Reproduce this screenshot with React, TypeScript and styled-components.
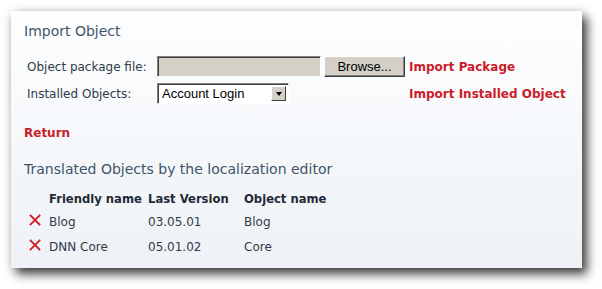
import React from 'react';
import styled, { createGlobalStyle } from 'styled-components';

const GlobalStyle = createGlobalStyle`
  html, body {
    margin: 0;
    padding: 0;
    background: #ffffff;
  }
  body {
    font-family: "DejaVu Sans", Verdana, sans-serif;
  }
`;

const Page = styled.div`
  padding: 11px 0 0 11px;
  width: 602px;
  height: 289px;
  box-sizing: border-box;
`;

const Panel = styled.div`
  width: 571px;
  height: 257px;
  box-sizing: border-box;
  padding: 12px 13px 0 13px;
  background: linear-gradient(to bottom, #fdfeff 0%, #eef2f6 100%);
  box-shadow: 5px 6px 10px rgba(0, 0, 0, 0.75), 0 0 10px rgba(0, 0, 0, 0.12);
`;

const Title = styled.div`
  font-size: 14px;
  line-height: 16px;
  color: #3f5468;
`;

const FormGrid = styled.div`
  display: grid;
  grid-template-columns: 130px 252px auto;
  grid-auto-rows: 21px;
  row-gap: 6px;
  align-items: center;
  margin: 17px 0 0 3px;
`;

const Label = styled.span`
  font-size: 12px;
  color: #2f3b48;
`;

const FileCell = styled.div`
  display: flex;
  gap: 3px;
  height: 21px;
`;

const FileInput = styled.div`
  width: 164px;
  height: 21px;
  box-sizing: border-box;
  background: #d4d0c8;
  border: 1px solid;
  border-color: #808080 #ffffff #ffffff #808080;
  box-shadow: inset 1px 1px 0 #404040;
`;

const BrowseButton = styled.button`
  width: 81px;
  height: 21px;
  padding: 0;
  font-family: "Liberation Sans", Arial, sans-serif;
  font-size: 13px;
  color: #000;
  background: #d4d0c8;
  border: 1px solid;
  border-color: #ffffff #404040 #404040 #ffffff;
  box-shadow: inset -1px -1px 0 #808080;
`;

const ActionLink = styled.a`
  font-size: 12px;
  font-weight: bold;
  color: #cc1b2b;
  text-decoration: none;
  cursor: pointer;
`;

const SelectBox = styled.div`
  position: relative;
  width: 132px;
  height: 21px;
  box-sizing: border-box;
  background: #fff;
  border: 1px solid;
  border-color: #808080 #ffffff #ffffff #808080;
  box-shadow: inset 1px 1px 0 #404040;
  font-family: "Liberation Sans", Arial, sans-serif;
  font-size: 13px;
  line-height: 19px;
  padding-left: 4px;
  color: #000;
`;

const SelectArrow = styled.span`
  position: absolute;
  top: 2px;
  right: 2px;
  width: 15px;
  height: 15px;
  box-sizing: border-box;
  background: #d4d0c8;
  border: 1px solid;
  border-color: #ffffff #404040 #404040 #ffffff;
  display: flex;
  align-items: center;
  justify-content: center;

  &::after {
    content: '';
    border-left: 3.5px solid transparent;
    border-right: 3.5px solid transparent;
    border-top: 4px solid #000;
  }
`;

const ReturnRow = styled.div`
  margin-top: 21px;
  line-height: 14px;
`;

const SubTitle = styled.div`
  margin-top: 21px;
  font-size: 14px;
  line-height: 16px;
  color: #3f5468;
`;

const ObjectsTable = styled.table`
  margin-top: 11px;
  border-collapse: collapse;
  font-size: 12px;
  color: #2f3b48;

  th {
    font-size: 11.6px;
    font-weight: bold;
    text-align: left;
    color: #1f2a36;
    height: 21px;
    padding: 0;
  }
  td {
    height: 25px;
    padding: 0;
  }
`;

const IconCell = styled.td`
  width: 25px;
  padding-left: 5px !important;
  box-sizing: border-box;
`;

const NameCell = styled.td<{ $width: number }>`
  width: ${(p) => p.$width}px;
`;

const DeleteIcon = () => (
  <svg width="12" height="12" viewBox="0 0 12 12" style={{ display: 'block', marginTop: -3 }}>
    <path d="M1.5 1.5 L10.5 10.5 M10.5 1.5 L1.5 10.5" stroke="#d11f26" strokeWidth="1.8" strokeLinecap="square" />
  </svg>
);

const rows = [
  { friendly: 'Blog', version: '03.05.01', name: 'Blog' },
  { friendly: 'DNN Core', version: '05.01.02', name: 'Core' },
];

export default function App() {
  return (
    <>
      <GlobalStyle />
      <Page>
        <Panel>
          <Title>Import Object</Title>
          <FormGrid>
            <Label>Object package file:</Label>
            <FileCell>
              <FileInput />
              <BrowseButton>Browse...</BrowseButton>
            </FileCell>
            <ActionLink>Import Package</ActionLink>
            <Label>Installed Objects:</Label>
            <div>
              <SelectBox>
                Account Login
                <SelectArrow />
              </SelectBox>
            </div>
            <ActionLink>Import Installed Object</ActionLink>
          </FormGrid>
          <ReturnRow>
            <ActionLink>Return</ActionLink>
          </ReturnRow>
          <SubTitle>Translated Objects by the localization editor</SubTitle>
          <ObjectsTable>
            <thead>
              <tr>
                <th />
                <th>Friendly name</th>
                <th>Last Version</th>
                <th>Object name</th>
              </tr>
            </thead>
            <tbody>
              {rows.map((r) => (
                <tr key={r.friendly}>
                  <IconCell>
                    <DeleteIcon />
                  </IconCell>
                  <NameCell $width={99}>{r.friendly}</NameCell>
                  <NameCell $width={96}>{r.version}</NameCell>
                  <td>{r.name}</td>
                </tr>
              ))}
            </tbody>
          </ObjectsTable>
        </Panel>
      </Page>
    </>
  );
}
